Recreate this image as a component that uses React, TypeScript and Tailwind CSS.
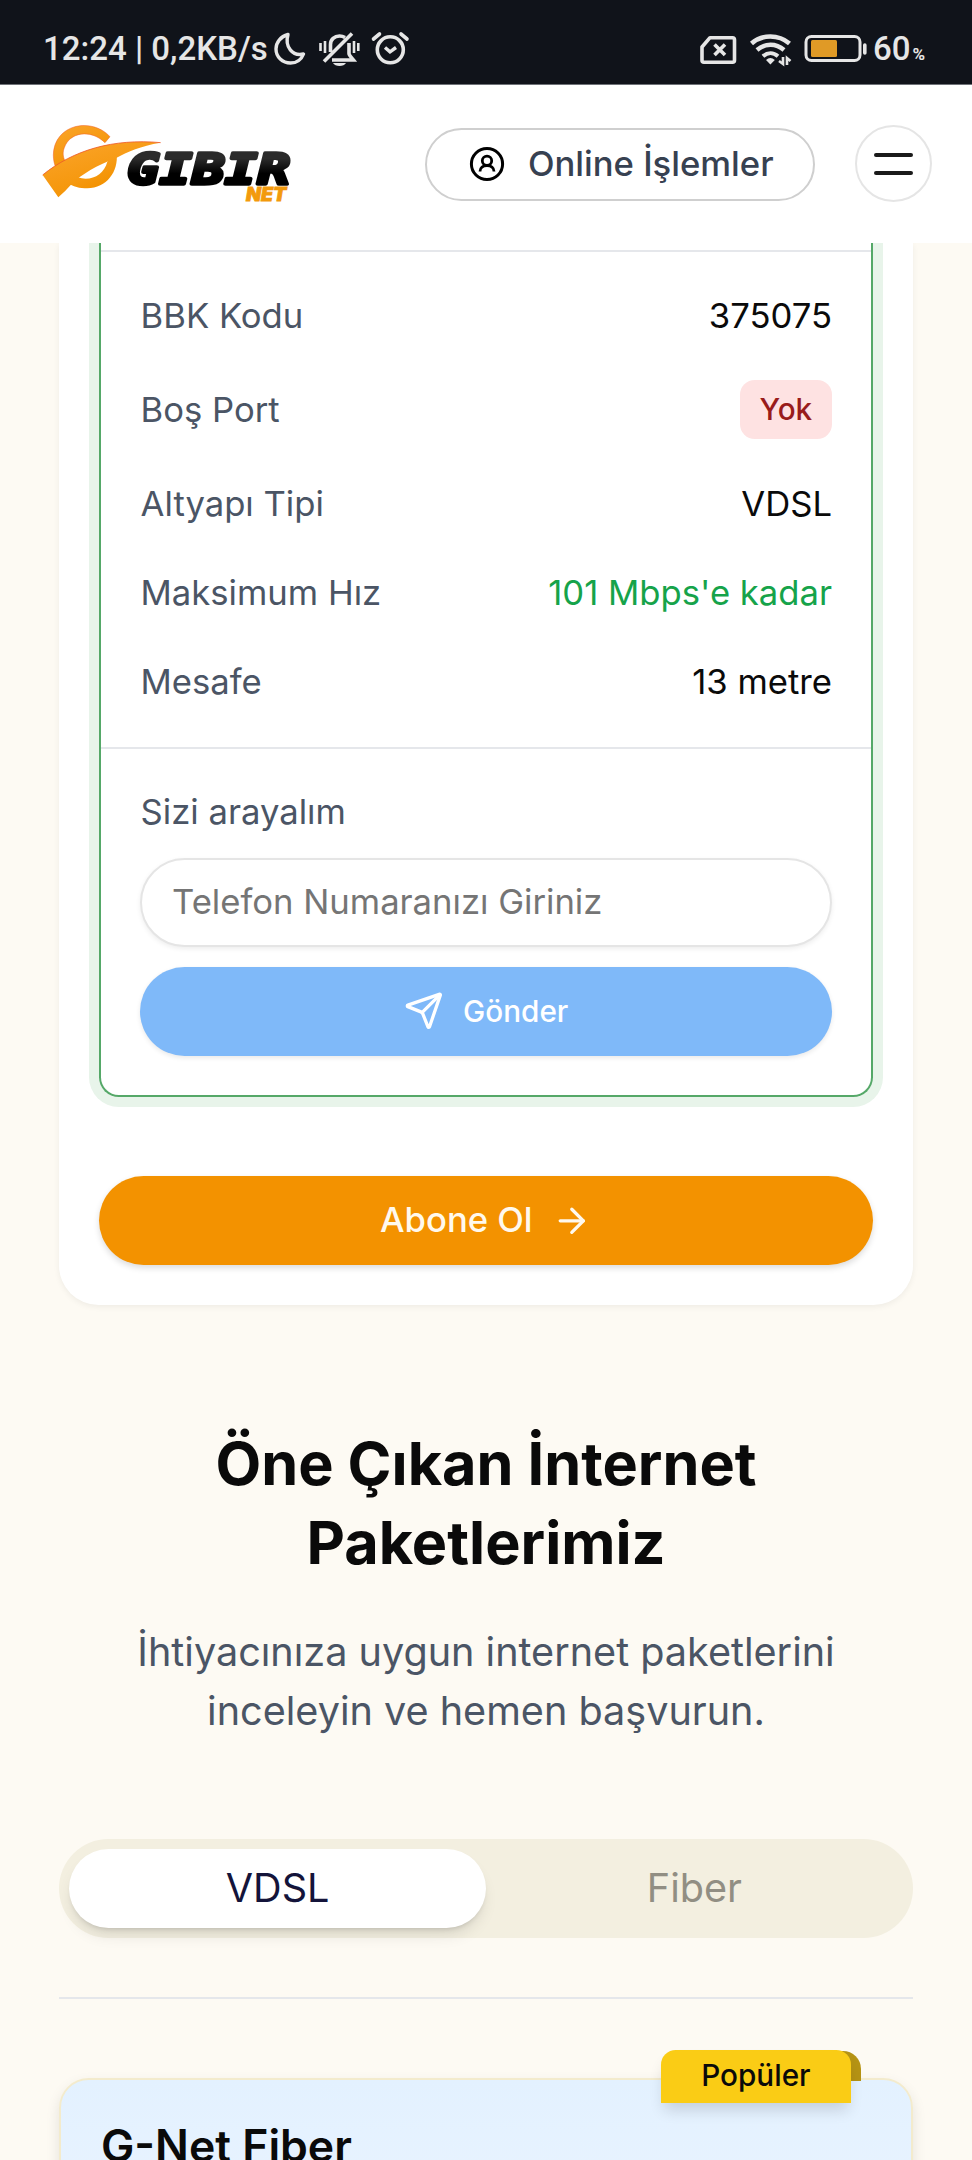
import { ArrowRight, Send } from "lucide-react";
import { useState } from "react";

const details = [
  { label: "BBK Kodu", value: "375075", kind: "text" },
  { label: "Boş Port", value: "Yok", kind: "badge" },
  { label: "Altyapı Tipi", value: "VDSL", kind: "text" },
  { label: "Maksimum Hız", value: "101 Mbps'e kadar", kind: "speed" },
  { label: "Mesafe", value: "13 metre", kind: "text" },
];

const tabs = ["VDSL", "Fiber"];

export default function App() {
  return (
    <div className="flex h-[2160px] w-[972px] flex-col overflow-hidden bg-[#fdfaf3] font-['Inter',sans-serif] text-[#0a0a0a]">
      <StatusBar />
      <Header />
      <main className="flex-1 overflow-hidden px-[59.4px]">
        <InfrastructureCard />
        <Packages />
      </main>
    </div>
  );
}

function StatusBar() {
  return (
    <div className="flex h-[85px] shrink-0 items-start justify-between border-b border-[#6f7278] bg-[#10131a] pl-[43px] pr-[48px] pt-[30px] font-['Roboto',sans-serif] text-[#e6e6e6]">
      <div className="flex items-start">
        <span className="whitespace-pre text-[33px] font-medium leading-[38px]">12:24 | 0,2KB/s</span>
        <svg className="ml-[4px]" width="142" height="40" viewBox="272 30 142 40" fill="none" stroke="currentColor">
          {/* Moon */}
          <path
            d="M288 34.5c-7.500 2-12 8-12 14.500 0 8 6.500 14 14.500 14 6 0 11-3.500 13-9-11 2.500-19-7-15.500-19.500z"
            strokeWidth="3.400"
            strokeLinejoin="round"
          />
          {/* Muted bell */}
          <path
            d="M330.500 52v-7.500c0-5 4-8.500 9-8.500 2 0 4 .6 5.500 1.600M349 43v10.500c0 2 3 4.500 4.500 6.500H332M324 61.500l28-28"
            strokeWidth="3.600"
          />
          <path d="M320.500 43v8M325 41v12M354 41v12M358.300 43v8" strokeWidth="2.600" />
          <path d="M333 63h13c-2 4-11 4-13 0z" fill="currentColor" stroke="none" />
          {/* Alarm clock */}
          <circle cx="390.300" cy="49.800" r="13" strokeWidth="3.600" />
          <path d="M385 47.500l5 4.300 6-4.300" strokeWidth="3.400" />
          <path d="M373.500 39l6-5M407 39l-6-5" strokeWidth="3.600" strokeLinecap="round" />
        </svg>
      </div>
      <div className="flex items-start">
        <svg width="174" height="40" viewBox="697 30 174 40" fill="none" stroke="currentColor">
          {/* SIM */}
          <path d="M709 37.700h22.500q2 0 2 2v20.500q0 2-2 2h-28.500q-2 0-2-2V47z" strokeWidth="3.600" strokeLinejoin="round" />
          <path d="M713.500 44.500l10.500 10.500M724 44.500l-10.500 10.500" strokeWidth="3.600" />
          {/* Wi-Fi */}
          <path d="M750.500 43.500c10.500-9.300 27-9.300 38 0" strokeWidth="4.600" />
          <path d="M756 50c8-7 19-7 27 0" strokeWidth="4.400" />
          <path d="M762 56.300c4.500-4 10.500-4 15 0" strokeWidth="4" />
          <path d="M765 60q4.400-4 8.800 0l-4.400 4.400z" fill="currentColor" stroke="none" />
          <path d="M782 57v7l-4-3M786 65v-7l3.500 3" strokeWidth="2.600" />
          {/* Battery */}
          <rect x="805" y="36.500" width="54" height="24" rx="5.500" strokeWidth="3" />
          <rect x="810" y="40" width="26" height="17" rx="1.500" fill="#e09a26" stroke="none" />
          <path d="M863.800 45v8" strokeWidth="3.600" strokeLinecap="round" />
        </svg>
        <span className="ml-[1px] text-[33px] font-medium leading-[38px]">60</span>
        <span className="-mr-[1px] ml-[2px] pt-[14.5px] text-[17px] font-bold leading-[18px]">%</span>
      </div>
    </div>
  );
}

function Header() {
  return (
    <header className="flex h-[158px] shrink-0 items-center justify-between bg-white px-[40px]">
      <Logo />
      <div className="flex items-center gap-[39.6px]">
        <button
          type="button"
          className="flex h-[73px] w-[390px] items-center rounded-full border-2 border-[#cfcfcf] pl-[42px] text-[34.65px] font-medium text-[#374151]"
        >
          <svg className="mr-[22.5px] text-black" width="36" height="36" viewBox="0 0 36 36" fill="none" stroke="currentColor">
            <circle cx="18" cy="18" r="15.600" strokeWidth="3" />
            <circle cx="18" cy="14.800" r="4.700" strokeWidth="2.800" />
            <path d="M11 25.500c0-3.800 3-6 7-6s7 2.200 7 6" strokeWidth="2.800" />
          </svg>
          <span className="whitespace-nowrap">Online İşlemler</span>
        </button>
        <button
          type="button"
          className="mb-px flex size-[77px] flex-col items-center justify-center gap-[14px] rounded-full border-2 border-[#e5e5e5]"
        >
          <span className="h-[4px] w-[39px] rounded-full bg-[#1a1a1a]" />
          <span className="h-[4px] w-[39px] rounded-full bg-[#1a1a1a]" />
        </button>
      </div>
    </header>
  );
}

function Logo() {
  return (
    <svg width="256" height="84" viewBox="40 122 256 84">
      <defs>
        <linearGradient id="mark" x1="0" y1="0" x2="0.6" y2="1">
          <stop offset="0" stopColor="#fba52c" />
          <stop offset="1" stopColor="#f39200" />
        </linearGradient>
        <linearGradient id="word" x1="0" y1="0" x2="0" y2="1">
          <stop offset="0.300" stopColor="#2b2b2b" />
          <stop offset="0.600" stopColor="#000" />
        </linearGradient>
      </defs>
      <g transform="scale(0.3333)" fill="url(#mark)">
        <path
          d="M330 410C275 350 162 372 160 465C160 480 163 492 167 502L196 485C188 470 188 455 193 443C208 398 270 385 315 428Z"
          stroke="#f0602a"
          strokeWidth="1.500"
        />
        <path d="M350 460C356 515 320 565 262 565C240 565 218 560 203 548L233 532C272 545 312 525 322 485Z" />
        <path d="M128 525C220 450 340 415 482 428C420 438 385 455 350 473C290 496 245 522 215 552Q195 575 175 592Z" />
        <path d="M128 525C220 450 340 415 482 428" fill="none" stroke="#ee5a2a" strokeWidth="2.500" />
      </g>
      <text
        x="127"
        y="183.500"
        textLength="163"
        lengthAdjust="spacingAndGlyphs"
        fill="url(#word)"
        stroke="url(#word)"
        strokeWidth="3.600"
        strokeLinejoin="round"
        className="font-['DejaVu_Sans_Mono',monospace] text-[43px] font-bold italic"
      >
        GIBIR
      </text>
      <text
        x="246"
        y="200.500"
        textLength="40.500"
        lengthAdjust="spacingAndGlyphs"
        fill="#f39a0c"
        stroke="#f39a0c"
        strokeWidth="0.800"
        className="font-['Inter',sans-serif] text-[18.500px] font-black italic"
      >
        NET
      </text>
    </svg>
  );
}

function InfrastructureCard() {
  return (
    <section className="rounded-b-[39.6px] bg-white px-[39.6px] pb-[39.6px] shadow-[0_2px_6px_rgba(0,0,0,0.06)]">
      <div className="rounded-b-[19.8px] border-2 border-t-0 border-[#55a868] pt-[7px] shadow-[0_0_0_10px_#e8f4ea]">
        <dl className="flex flex-col gap-[39.6px] border-y-2 border-[#e5e7eb] pb-[40.3px] pl-[39.6px] pr-[39px] pt-[38.8px]">
          {details.map((item) => (
            <div key={item.label} className="flex items-center justify-between text-[34.65px] leading-[49.5px]">
              <dt className="text-[#4b5565]">{item.label}</dt>
              {item.kind === "badge" ? (
                <dd className="rounded-[14.8px] bg-[#fee2e2] px-[19.8px] py-[9.9px] text-[29.7px] font-medium leading-[39.6px] text-[#991b1b]">
                  {item.value}
                </dd>
              ) : (
                <dd className={item.kind === "speed" ? "text-[#16a34a]" : ""}>{item.value}</dd>
              )}
            </div>
          ))}
        </dl>

        {/* Call back form */}
        <div className="flex flex-col px-[39px] pb-[39.6px] pt-[38.6px]">
          <label htmlFor="phone" className="pl-[0.6px] text-[34.65px] leading-[49.5px] text-[#4b5565]">
            Sizi arayalım
          </label>
          <input
            id="phone"
            type="tel"
            placeholder="Telefon Numaranızı Giriniz"
            className="mt-[20.8px] h-[89px] rounded-full border-2 border-[#e5e5e5] bg-white px-[30px] pb-[3px] text-[34.65px] shadow-[0_2px_5px_rgba(0,0,0,0.07)] placeholder:text-[#757575]"
          />
          <button
            type="button"
            className="mt-[19.8px] flex h-[89px] items-center justify-center gap-[19.8px] rounded-full bg-[#7fb9f9] text-[29.7px] font-medium text-white shadow-[0_2px_5px_rgba(0,0,0,0.09)]"
          >
            <Send size={39.6} />
            Gönder
          </button>
        </div>
      </div>

      <button
        type="button"
        className="mt-[78.8px] flex h-[89px] w-full items-center justify-center gap-[19.8px] rounded-full bg-[#f39200] text-[34.65px] font-medium text-[#fff9ee] shadow-[0_3px_6px_rgba(0,0,0,0.14)]"
      >
        Abone Ol
        <ArrowRight size={39.6} />
      </button>
    </section>
  );
}

function Packages() {
  const [active, setActive] = useState("VDSL");

  return (
    <section className="pt-[119px]">
      <div className="text-center">
        <h2 className="text-[59.4px] font-bold leading-[79.2px]">
          Öne Çıkan İnternet
          <br />
          Paketlerimiz
        </h2>
        <p className="mt-[40.6px] text-[39.6px] leading-[59.4px] text-[#4b5565]">
          İhtiyacınıza uygun internet paketlerini
          <br />
          inceleyin ve hemen başvurun.
        </p>
      </div>

      <div className="mt-[97.6px] grid h-[99px] grid-cols-2 rounded-full bg-[#f3efe0] p-[9.9px]">
        {tabs.map((tab) => (
          <button
            key={tab}
            type="button"
            onClick={() => setActive(tab)}
            className={`rounded-full pt-[1px] text-[39.6px] ${
              active === tab
                ? "bg-white text-[#14143a] shadow-[0_10px_15px_-3px_rgba(0,0,0,0.1),0_4px_6px_-4px_rgba(0,0,0,0.2)]"
                : "text-[#918e83]"
            }`}
          >
            {tab}
          </button>
        ))}
      </div>

      <div className="mt-[59.4px] border-t-2 border-[#e5e7eb] pt-[79px]">
        <div className="relative h-[400px] rounded-[29.7px] border-2 border-[#f3ebcd] bg-linear-to-b from-[#e3f1ff] to-[#f3f8ff] px-[39.6px] pt-[31.5px] shadow-[0_6px_14px_rgba(0,0,0,0.1)]">
          <h3 className="text-[44.55px] font-semibold leading-[69.3px]">G-Net Fiber</h3>
          {/* Ribbon with a folded corner behind it */}
          <div className="absolute right-[49.5px] top-[-29px] h-[30px] w-[40px] rounded-tr-[18px] bg-[#b59314]" />
          <div className="absolute right-[59.5px] top-[-30px] flex h-[52.500px] w-[190.500px] items-center justify-center rounded-t-[14.8px] bg-[#facc15] pb-[3px] text-[29.7px] font-medium text-[#0a0a0a] shadow-[0_10px_15px_-3px_rgba(0,0,0,0.14)]">
            Popüler
          </div>
        </div>
      </div>
    </section>
  );
}
